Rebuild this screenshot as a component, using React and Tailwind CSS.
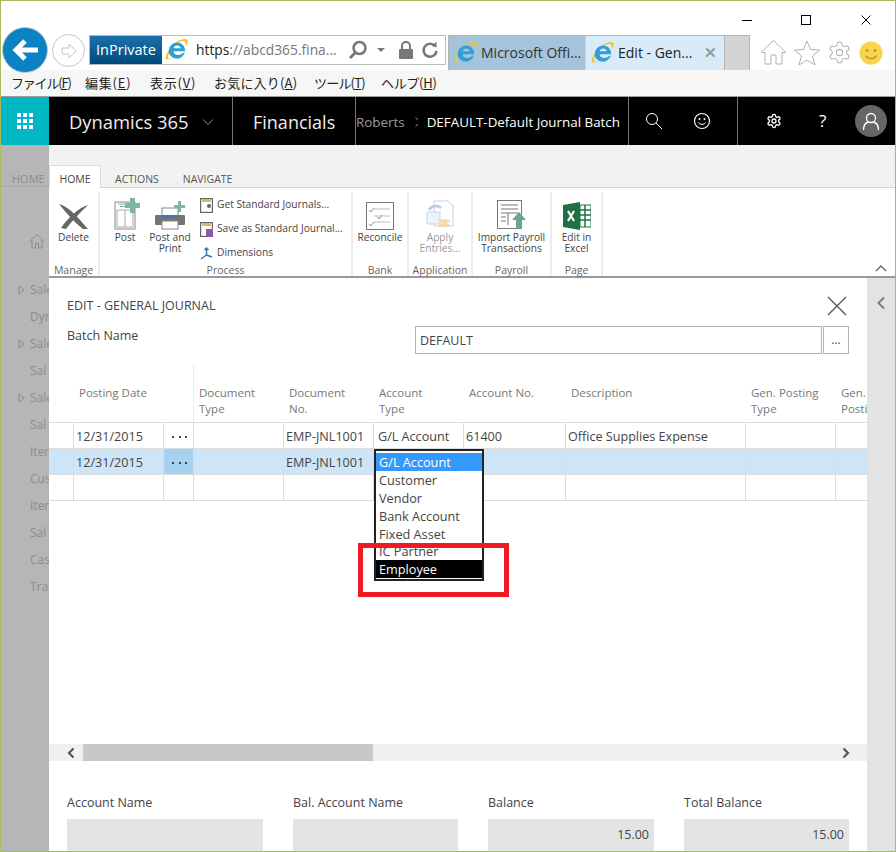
const IE = ({ s = 26 }) => (
  <svg width={s} height={s} viewBox="0 0 28 28" className="shrink-0">
    <path d="M4 24C0 28 -1 22 5 13C11 4 22 -1 26 2C28 4 26 8 24 10C25 6 24 3 20 3.500C15 4 7 12 4.500 18C3 22 3.500 24 6 24C8 24 10 23 12 22C9 24 6 25.500 4 24Z" fill="#f4c430" />
    <path d="M4.500 14a9.500 9.500 0 0 1 19 1.500H10c.3 5 7 6 11.500 1.800h1.500c-2 5-6 7.500-10 6.700c-6-1-9.500-5-8.500-10zM10 12h8.500c-.5-4.500-8-4.500-8.500 0z" fill="#2f9fd8" />
  </svg>
);

const Ln = ({ children }) => <span className="underline">{children}</span>;

const gearPath = "M12.220 2h-.44a2 2 0 0 0-2 2v.18a2 2 0 0 1-1 1.730l-.43.25a2 2 0 0 1-2 0l-.15-.08a2 2 0 0 0-2.730.73l-.22.38a2 2 0 0 0 .73 2.730l.15.1a2 2 0 0 1 1 1.720v.51a2 2 0 0 1-1 1.740l-.15.09a2 2 0 0 0-.73 2.730l.22.38a2 2 0 0 0 2.730.73l.15-.08a2 2 0 0 1 2 0l.43.25a2 2 0 0 1 1 1.730V20a2 2 0 0 0 2 2h.44a2 2 0 0 0 2-2v-.18a2 2 0 0 1 1-1.730l.43-.25a2 2 0 0 1 2 0l.15.08a2 2 0 0 0 2.730-.73l.22-.39a2 2 0 0 0-.73-2.730l-.15-.08a2 2 0 0 1-1-1.740v-.5a2 2 0 0 1 1-1.740l.15-.09a2 2 0 0 0 .73-2.730l-.22-.38a2 2 0 0 0-2.730-.73l-.15.08a2 2 0 0 1-2 0l-.43-.25a2 2 0 0 1-1-1.730V4a2 2 0 0 0-2-2z";

function Chrome() {
  return (
    <div className="h-[96px] relative bg-white">
      <div className="h-[34px] flex justify-end text-black">
        <svg width="12" height="12" className="mt-[13px] mr-[47px]"><path d="M1 6.500H11" stroke="#000" strokeWidth="1" /></svg>
        <svg width="12" height="12" className="mt-[13px] mr-[48px]"><rect x="1.500" y="1.500" width="9" height="9" fill="none" stroke="#000" /></svg>
        <svg width="12" height="12" className="mt-[13px] mr-[23px]"><path d="M1.500 1.500L10.500 10.500M10.500 1.500L1.500 10.500" stroke="#000" /></svg>
      </div>
      <div className="h-[35px] flex items-start relative">
        <div className="absolute left-[1px] top-[-8px] w-[46px] h-[46px] rounded-full bg-[#0a82c4] border border-[#c8c8c8] flex items-center justify-center">
          <svg width="28" height="28" viewBox="0 0 28 28"><path d="M14 5L5 14L14 23M6 14H27" fill="none" stroke="#fff" strokeWidth="5" /></svg>
        </div>
        <div className="absolute left-[51px] top-[-1px] w-[33px] h-[33px] rounded-full border border-[#c4c4c4] bg-white flex items-center justify-center">
          <svg width="20" height="20" viewBox="0 0 20 20"><path d="M10 3L17 10L10 17V13H3V7H10Z" fill="none" stroke="#c4c4c4" /></svg>
        </div>
        <div className="ml-[88px] w-[357px] h-[30px] border border-[#b8b8b8] flex items-center bg-white">
          <div className="w-[72px] h-full bg-gradient-to-b from-[#1a72ab] to-[#004a7c] text-white text-[14.500px] flex items-center justify-center">InPrivate</div>
          <div className="ml-[3px] w-[25px]"><IE s={24} /></div>
          <div className="ml-[6px] text-[13.800px] text-[#777] whitespace-nowrap w-[144px] overflow-hidden"><span className="text-[#222]">https</span>://abcd365.fina...</div>
          <svg width="20" height="20" viewBox="0 0 20 20" className="ml-[8px]"><circle cx="11.500" cy="8" r="6" fill="none" stroke="#777" strokeWidth="2.500" /><path d="M7 13L2 18" stroke="#777" strokeWidth="3" /></svg>
          <svg width="10" height="6" className="ml-[8px]"><path d="M1 1H9L5 5Z" fill="#777" /></svg>
          <svg width="16" height="18" viewBox="0 0 16 18" className="ml-[12px]"><path d="M4 8V5a4 4 0 0 1 8 0v3" fill="none" stroke="#777" strokeWidth="2" /><rect x="1" y="8" width="14" height="10" rx="1" fill="#777" /></svg>
          <svg width="18" height="18" viewBox="0 0 18 18" className="ml-[7px]"><path d="M14 5A6.500 6.500 0 1 0 15.500 10" fill="none" stroke="#777" strokeWidth="2.500" /><path d="M11 5L15.500 0.500V6.500Z" fill="#777" /></svg>
        </div>
        <div className="ml-[2px] flex h-[35px] border-l border-t border-[#b4b4b4]">
          <div className="w-[137px] h-full bg-[#a5c3da] flex items-center pl-[5px] gap-[3px] text-[14px] text-[#333] whitespace-nowrap border-r border-[#c8d4dc] pb-[1px]"><IE s={24} />Microsoft Offi...</div>
          <div className="w-[138px] h-full bg-[#d9ebf9] flex items-center pl-[5px] gap-[3px] text-[14px] text-[#222] whitespace-nowrap relative pb-[1px]"><IE s={24} />Edit - Gen...<span className="absolute right-[7px] top-[8px] text-[#8f9aa3] text-[15px] font-bold leading-[16px]">✕</span></div>
          <div className="w-[26px] h-full bg-[#d4d4d4] border-l border-r border-[#b4b4b4]" />
        </div>
        <div className="ml-[10px] flex items-center gap-[7px] h-[35px]">
          <svg width="27" height="27" viewBox="0 0 27 27"><path d="M1 13.500L13.500 1.500L26 13.500H22V25H16V16H11V25H5V13.500Z" fill="#fff" stroke="#b0b0b0" /></svg>
          <svg width="26" height="26" viewBox="0 0 26 26"><path d="M13 1L16.500 9.500L25.500 10L18.500 16L21 25L13 20L5 25L7.500 16L.5 10L9.500 9.500Z" fill="#fff" stroke="#b0b0b0" /></svg>
          <svg width="25" height="25" viewBox="0 0 24 24" fill="none" stroke="#b0b0b0"><path d={gearPath} /><circle cx="12" cy="12" r="3" /></svg>
          <svg width="24" height="24" viewBox="0 0 24 24"><circle cx="12" cy="12" r="11.500" fill="#f7d44c" /><circle cx="8" cy="9.500" r="1.200" fill="#a58a20" /><circle cx="16" cy="9.500" r="1.200" fill="#a58a20" /><path d="M6.500 14.500c2 4 9 4 11 0" fill="none" stroke="#a58a20" strokeWidth="1.200" /></svg>
        </div>
      </div>
      <div className="h-[27px] bg-[#f6f6f6] border-b border-[#a0a0a0] flex items-center pl-[10px] text-[13px] text-[#222] font-['Noto_Sans_CJK_JP','Noto_Sans',sans-serif] whitespace-nowrap">
        <span className="w-[74px] tracking-[-1.200px]">ファイル(<Ln>F</Ln>)</span>
        <span className="w-[65px] tracking-[0.800px]">編集(<Ln>E</Ln>)</span>
        <span className="w-[64px] tracking-[0.800px]">表示(<Ln>V</Ln>)</span>
        <span className="w-[100px] tracking-[0.200px]">お気に入り(<Ln>A</Ln>)</span>
        <span className="w-[67px] tracking-[-0.800px]">ツール(<Ln>T</Ln>)</span>
        <span className="tracking-[-0.300px]">ヘルプ(<Ln>H</Ln>)</span>
      </div>
    </div>
  );
}

function NavBar() {
  return (
    <div className="h-[48px] bg-black flex text-white">
      <div className="w-[48px] bg-[#00b7c3] flex items-center justify-center">
        <div className="grid grid-cols-3 gap-[2px]">
          {[0, 1, 2, 3, 4, 5, 6, 7, 8].map((i) => <div key={i} className="w-[4px] h-[4px] bg-white" />)}
        </div>
      </div>
      <div className="w-[184px] border-r border-[#777] flex items-center pl-[20px] pt-[2px] text-[18.400px] text-[#eee]">
        Dynamics 365
        <svg width="12" height="8" className="ml-[13px]"><path d="M1 1.500L6 6.500L11 1.500" fill="none" stroke="#999" /></svg>
      </div>
      <div className="w-[123px] border-r border-[#777] flex items-center pl-[20px] pt-[2px] text-[18px] text-[#eee]">Financials</div>
      <div className="w-[273px] border-r border-[#777] flex items-center justify-end pr-[8px] pt-[2px] overflow-hidden whitespace-nowrap text-[13.400px]">
        <span className="text-[#9a9a9a]">Roberts</span>
        <svg width="8" height="12" className="mx-[9px]"><path d="M1.500 1.500L6.500 6L1.500 10.500" fill="none" stroke="#9a9a9a" /></svg>
        <span>DEFAULT-Default Journal Batch</span>
      </div>
      <div className="w-[109px] border-r border-[#777] flex items-center pl-[16px]">
        <svg width="18" height="18" viewBox="0 0 18 18"><circle cx="7" cy="7" r="5.500" fill="none" stroke="#fff" /><path d="M11 11L17 17" stroke="#fff" /></svg>
        <svg width="18" height="18" viewBox="0 0 18 18" className="ml-[30px]"><circle cx="9" cy="9" r="7.500" fill="none" stroke="#fff" strokeWidth="1.200" /><circle cx="6.500" cy="7" r="1" fill="#fff" /><circle cx="11.500" cy="7" r="1" fill="#fff" /><path d="M5.500 10.500c1.500 2.500 5.500 2.500 7 0" fill="none" stroke="#fff" /></svg>
      </div>
      <div className="flex-1 flex items-center pl-[28px]">
        <svg width="16" height="16" viewBox="0 0 24 24" fill="none" stroke="#fff" strokeWidth="2"><path d={gearPath} /><circle cx="12" cy="12" r="3" /></svg>
        <span className="ml-[37px] text-[17px] w-[10px]">?</span>
        <div className="ml-[26px] w-[32px] h-[32px] rounded-full bg-[#666] flex items-center justify-center">
          <svg width="20" height="20" viewBox="0 0 20 20" fill="none" stroke="#fff" strokeWidth="1.300"><circle cx="10" cy="7" r="4.500" /><path d="M2.500 19c0-6 3-7.500 5-8M17.500 19c0-6-3-7.500-5-8" /></svg>
        </div>
      </div>
    </div>
  );
}

function Sidebar() {
  const rows = [[1, "Sale"], [0, "Dyn"], [1, "Sale"], [0, "Sal"], [1, "Sale"], [0, "Sal"], [0, "Iter"], [0, "Cus"], [0, "Iter"], [0, "Sal"], [0, "Cas"], [0, "Tra"]];
  return (
    <div className="w-[48px] bg-[#b6b6b6] text-[#8c8c8c] text-[12px] overflow-hidden whitespace-nowrap">
      <div className="h-[42px] pl-[11px] pt-[26px] leading-[16px] text-[11px] border-b border-[#a8a8a8]">HOME</div>
      <svg width="16" height="16" viewBox="0 0 16 16" className="ml-[28px] mt-[46px]"><path d="M1 8L8 1.500L15 8M3 7V15H6.500V10H9.500V15H13V7" fill="none" stroke="#8c8c8c" /></svg>
      <div className="mt-[27px]">
        {rows.map(([t, label], i) => (
          <div key={i} className="h-[27px] flex items-center">
            <span className="w-[16px] pl-[17px] shrink-0">
              {t ? <svg width="7" height="10"><path d="M1 1L6 5L1 9Z" fill="none" stroke="#8c8c8c" /></svg> : null}
            </span>
            <span className="ml-[12px]">{label}</span>
          </div>
        ))}
      </div>
    </div>
  );
}

const Big = ({ icon, children, w, gray }) => (
  <div className={`flex flex-col items-center ${w} ${gray ? "text-[#999]" : "text-[#444]"}`}>
    <div className="h-[34px] flex items-end justify-center">{icon}</div>
    <div className="text-[10.200px] leading-[11px] text-center mt-[2px] whitespace-nowrap">{children}</div>
  </div>
);

const Group = ({ label, w, children }) => (
  <div className={`${w} mt-[4px] border-r-2 border-[#ececec] flex flex-col shrink-0`}>
    <div className="flex-1 flex pt-[4px]">{children}</div>
    <div className="h-[13px] text-center text-[10.500px] leading-[14px] text-[#666]">{label}</div>
  </div>
);

function Ribbon() {
  return (
    <div>
      <div className="h-[43px] bg-[#f2f2f2] flex items-end border-b border-[#d0d4d8] text-[10.500px] text-[#555]">
        <div className="w-[52px] h-[23px] bg-white border border-b-0 border-[#dcdcdc] flex items-center justify-center -mb-px pt-[6px] text-[#444]">HOME</div>
        <div className="ml-[14px] h-[22px] flex items-center pt-[7px]">ACTIONS</div>
        <div className="ml-[24px] h-[22px] flex items-center pt-[7px]">NAVIGATE</div>
      </div>
      <div className="h-[90px] bg-white border-b-2 border-[#999] flex relative">
        <Group label="Manage" w="w-[51px]">
          <Big w="w-[49px]" icon={
            <svg width="30" height="28" viewBox="0 0 30 28"><path d="M0 2C11 5 22 19 29 27L24 27C16 21 8 12 0 2Z" fill="#666" /><path d="M29 3C20 5 8 17 2 26L7 27C13 19 22 10 29 3Z" fill="#666" /></svg>
          }>Delete</Big>
        </Group>
        <Group label="Process" w="w-[253px]">
          <Big w="w-[50px]" icon={
            <svg width="28" height="32" viewBox="0 0 28 32" className="ml-[6px]"><rect x="1" y="4" width="20" height="27" fill="#fff" stroke="#888" /><path d="M3 12H19V29H3ZM11 12V29" stroke="#aaa" fill="none" /><path d="M4 6H11M6 8.500H11" stroke="#7cb5a0" /><path d="M16 0H21V5H26V10H21V15H16V10H11V5H16Z" fill="#7cb5a0" /></svg>
          }>Post</Big>
          <Big w="w-[46px] ml-[-3px]" icon={
            <svg width="32" height="30" viewBox="0 0 32 30"><rect x="8" y="8" width="16" height="8" fill="#fff" stroke="#888" /><rect x="1" y="15" width="30" height="10" rx="1" fill="#757575" /><rect x="8" y="15" width="16" height="3" fill="#3b78b8" /><rect x="8" y="21" width="16" height="8" fill="#fff" stroke="#888" /><path d="M24 1H27V5H31V8H27V12H24V8H20V5H24Z" fill="#7cb5a0" /></svg>
          }>Post and<br />Print</Big>
          <div className="ml-[7px] pt-[1px] flex flex-col text-[10.200px] text-[#444] whitespace-nowrap gap-[8px]">
            <div className="h-[16px] flex items-center gap-[4px]">
              <svg width="13" height="15" viewBox="0 0 13 15"><rect x=".5" y=".5" width="12" height="14" fill="#fff" stroke="#666" strokeWidth="1.400" /><rect x="2" y="1" width="9" height="3" fill="#d8b878" /><circle cx="9" cy="8" r="2" fill="#666" /></svg>
              Get Standard Journals...
            </div>
            <div className="h-[16px] flex items-center gap-[4px]">
              <svg width="13" height="15" viewBox="0 0 13 15"><rect x=".5" y=".5" width="12" height="14" fill="#fff" stroke="#666" strokeWidth="1.400" /><rect x="2" y="1" width="9" height="3" fill="#d8b878" /><rect x="6" y="7" width="7" height="8" fill="#8a5aa8" /></svg>
              Save as Standard Journal...
            </div>
            <div className="h-[16px] flex items-center gap-[4px]">
              <svg width="13" height="13" viewBox="0 0 13 13" fill="none" stroke="#3b78b8" strokeWidth="1.500"><path d="M6.500 1V8M6.500 8L1 12M6.500 8L12 10M4.500 3L6.500 1L8.500 3" /></svg>
              Dimensions
            </div>
          </div>
        </Group>
        <Group label="Bank" w="w-[56px]">
          <Big w="w-[54px]" icon={
            <svg width="28" height="28" viewBox="0 0 28 28"><rect x=".5" y=".5" width="27" height="27" fill="#fff" stroke="#777" /><path d="M8 7H24M8 14H24M8 20H24" stroke="#bbb" /><path d="M3 8L5 10L8 6M11 15L13 17L16 13M3 22L5 24L8 20" fill="none" stroke="#6aa58f" /></svg>
          }>Reconcile</Big>
        </Group>
        <Group label="Application" w="w-[64px]">
          <Big gray w="w-[62px]" icon={
            <svg width="28" height="30" viewBox="0 0 28 30"><path d="M8 1H22L27 6V26H8Z" fill="#fff" stroke="#d0d0d0" /><path d="M1 12H14V24H1Z" fill="#eef3fa" stroke="#c6d6ea" /><path d="M3 10C6 5 12 5 15 8" fill="none" stroke="#b6cbe6" strokeWidth="2.500" /><ellipse cx="18" cy="21" rx="6" ry="2" fill="#f6d9ae" /><ellipse cx="18" cy="25" rx="6" ry="2" fill="#f6d9ae" /></svg>
          }>Apply<br />Entries...</Big>
        </Group>
        <Group label="Payroll" w="w-[79px]">
          <Big w="w-[77px]" icon={
            <svg width="30" height="30" viewBox="0 0 30 30"><rect x=".5" y=".5" width="24" height="28" fill="#fff" stroke="#777" /><path d="M4 5H21M4 9H21M4 13H21M11 13V25M4 17H9M4 21H9" stroke="#777" /><path d="M22 12L29 20H25V29H19V20H15Z" fill="#6aa58f" /></svg>
          }>Import Payroll<br />Transactions</Big>
        </Group>
        <Group label="Page" w="w-[51px]">
          <Big w="w-[49px]" icon={
            <svg width="28" height="28" viewBox="0 0 28 28"><path d="M0 3L17 0V28L0 25Z" fill="#1e7145" /><path d="M17 3H28V25H17Z" fill="#fff" stroke="#1e7145" /><path d="M17 8H28M17 13H28M17 18H28M22 3V25" stroke="#1e7145" strokeWidth="1.500" /><path d="M5 9L11 19M11 9L5 19" stroke="#fff" strokeWidth="2.200" /></svg>
          }>Edit in<br />Excel</Big>
        </Group>
        <svg width="12" height="8" className="absolute right-[8px] bottom-[4px]"><path d="M1 7L6 2L11 7" fill="none" stroke="#666" strokeWidth="1.400" /></svg>
      </div>
    </div>
  );
}

const gridCols = "grid grid-cols-[25px_90px_30px_90px_90px_90px_102px_180px_90px_31px]";

function Dots() {
  return (
    <div className="flex gap-[4.500px]">
      <span className="w-[2px] h-[2px] bg-[#444]" />
      <span className="w-[2px] h-[2px] bg-[#444]" />
      <span className="w-[2px] h-[2px] bg-[#444]" />
    </div>
  );
}

function Table() {
  const heads = ["", "Posting Date", "", "Document\nType", "Document\nNo.", "Account\nType", "Account No.", "Description", "Gen. Posting\nType", "Gen.\nPosti"];
  const rows = [
    { sel: false, c: ["", "12/31/2015", "d", "", "EMP-JNL1001", "G/L Account", "61400", "Office Supplies Expense", "", ""] },
    { sel: true, c: ["", "12/31/2015", "d", "", "EMP-JNL1001", "", "", "", "", ""] },
    { sel: false, c: ["", "", "", "", "", "", "", "", "", ""] },
  ];
  return (
    <div className="mt-[11px] relative text-[12.600px]">
      <div className={`${gridCols} h-[58px] text-[#777] text-[11.500px] leading-[16px] border-b border-[#dcdcdc]`}>
        {heads.map((h, i) => (
          <div key={i} className={`pt-[20px] whitespace-pre overflow-hidden ${i === 1 ? "pl-[5px]" : i > 2 ? "pl-[5px]" : ""} ${i === 2 ? "border-r border-[#ececec]" : ""}`}>{h}</div>
        ))}
      </div>
      {rows.map((r, ri) => (
        <div key={ri} className={`${gridCols} h-[26px] border-b border-[#dcdcdc] ${r.sel ? "bg-[#cde5f6]" : "bg-white"} text-[#444]`}>
          {r.c.map((t, i) => (
            <div key={i} className={`flex items-center whitespace-nowrap overflow-hidden pt-[3px] ${i === 5 ? "pl-[4px]" : "pl-[2px]"} ${i < 9 ? "border-r border-[#dcdcdc]" : ""} ${i === 2 ? "justify-center pl-0 pt-0" : ""} ${i === 2 && r.sel ? "bg-[#a5d2f1]" : ""}`}>{t === "d" ? <Dots /> : t}</div>
          ))}
        </div>
      ))}
      <div className="absolute left-[325px] top-[84px] w-[110px] h-[132px] border-2 border-[#222] bg-white py-[2px] text-[12.700px] text-[#444] leading-[18px] overflow-hidden z-10">
        <div className="bg-[#3399ff] text-white pl-[3px] h-[18px]">G/L Account</div>
        <div className="pl-[3px]">Customer</div>
        <div className="pl-[3px]">Vendor</div>
        <div className="pl-[3px]">Bank Account</div>
        <div className="pl-[3px] -mt-[0.500px]">Fixed Asset</div>
        <div className="pl-[3px] -mt-[0.500px]">IC Partner</div>
        <div className="bg-black text-white pl-[3px] h-[18px]">Employee</div>
      </div>
    </div>
  );
}

function Main() {
  return (
    <div className="flex-1 flex flex-col min-w-0">
      <Ribbon />
      <div className="flex-1 flex bg-white">
        <div className="w-[818px] flex flex-col relative">
          <div className="pl-[18px] pt-[20px] text-[12.500px] text-[#444] leading-[16px]">EDIT - GENERAL JOURNAL</div>
          <svg width="20" height="20" viewBox="0 0 20 20" className="absolute left-[778px] top-[18px]"><path d="M1 1L19 19M19 1L1 19" stroke="#555" strokeWidth="1.300" /></svg>
          <div className="flex items-start pl-[18px] mt-[6px]">
            <span className="w-[348px] text-[12.500px] text-[#444] leading-[16px] pt-[8px]">Batch Name</span>
            <div className="w-[407px] h-[28px] border border-[#b4b4b4] flex items-center pl-[4px] pt-[2px] text-[12.500px] text-[#444] mt-[6px]">DEFAULT</div>
            <div className="ml-[1px] w-[26px] h-[28px] border border-[#b4b4b4] flex items-center justify-center text-[12px] text-[#444] mt-[6px]">...</div>
          </div>
          <Table />
          <div className="flex-1" />
          <div className="h-[17px] bg-[#f0f0f0] flex items-center relative">
            <svg width="10" height="12" className="ml-[17px]"><path d="M7.500 1.500L3 6L7.500 10.500" fill="none" stroke="#555" strokeWidth="2.200" /></svg>
            <div className="ml-[7px] w-[290px] h-full bg-[#c8c8c8]" />
            <svg width="10" height="12" className="absolute right-[16px] top-[3px]"><path d="M2.500 1.500L7 6L2.500 10.500" fill="none" stroke="#555" strokeWidth="2.200" /></svg>
          </div>
          <div className="h-[90px] flex pl-[18px] pt-[34px] text-[12.500px] text-[#444]">
            {[["Account Name", "w-[196px]", "mr-[30px]", ""], ["Bal. Account Name", "w-[165px]", "mr-[30px]", ""], ["Balance", "w-[166px]", "mr-[30px]", "15.00"], ["Total Balance", "w-[165px]", "", "15.00"]].map(([l, w, m, v]) => (
              <div key={l} className={`${w} ${m}`}>
                <div className="h-[18px] leading-[16px] mb-[6px]">{l}</div>
                <div className="h-[32px] bg-[#e4e4e4] flex items-center justify-end pr-[5px]">{v}</div>
              </div>
            ))}
          </div>
        </div>
        <div className="w-[28px] bg-[#e3e3e3] pt-[18px] flex justify-center">
          <svg width="10" height="14"><path d="M8 1.500L2.500 7L8 12.500" fill="none" stroke="#777" strokeWidth="1.800" /></svg>
        </div>
      </div>
    </div>
  );
}

export default function App() {
  return (
    <div className="w-[896px] h-[852px] border border-[#a9bc5c] bg-white overflow-hidden flex flex-col relative font-['Open_Sans','Noto_Sans_CJK_JP',sans-serif]">
      <Chrome />
      <NavBar />
      <div className="flex-1 flex min-h-0">
        <Sidebar />
        <Main />
      </div>
      <div className="absolute left-[357px] top-[542px] w-[151px] h-[54px] border-[5px] border-[#ed1c24] z-20" />
    </div>
  );
}
